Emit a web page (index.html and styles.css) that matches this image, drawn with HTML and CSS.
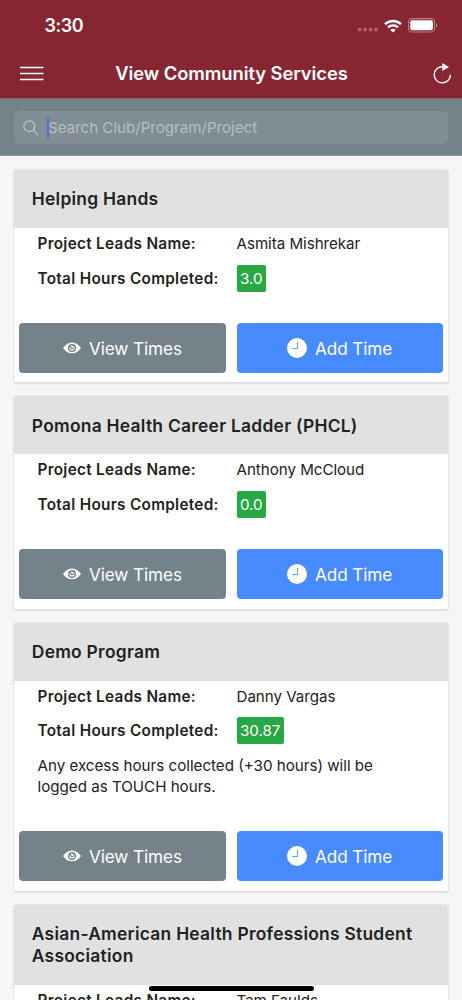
FILE: index.html
```
<!DOCTYPE html>
<html lang="en">
<head>
<meta charset="utf-8">
<title>View Community Services</title>
<link rel="stylesheet" href="styles.css">
</head>
<body>
<svg class="defs" width="0" height="0">
  <symbol id="eye" viewBox="0 0 18 12"><path fill="currentColor" fill-rule="evenodd" d="M9 .5C5 .5 2 3 0 6c2 3 5 5.300 9 5.300S16 9 18 6C16 3 13 .5 9 .5zM9 2a4 4 0 1 1 0 8 4 4 0 0 1 0-8zM9 3.400c-.4 0-.8.1-1.100.2a1.300 1.300 0 1 0 3.200 1c.3.400.5.900.5 1.400a2.600 2.600 0 1 1-5.200 0c0-.6.2-1.200.6-1.600-.1 1.500 1 2.900 2.300 2.900 1 0 1.700-.8 1.700-1.700A2.600 2.600 0 0 0 9 3.400z"/></symbol>
  <symbol id="clock" viewBox="0 0 20 20"><circle cx="10" cy="10" r="10" fill="#fff"/><path d="M10.600 4v6.600H5.200" fill="none" stroke="#488aff" stroke-width=".9"/></symbol>
</svg>
<div class="screen">
  <header class="top">
    <div class="status">
      <span class="time">3:30</span>
      <div class="indicators">
        <svg class="dots" width="22" height="5" viewBox="0 0 22 5" fill="#a8626d"><circle cx="2.500" cy="2.500" r="2"/><circle cx="8" cy="2.500" r="2"/><circle cx="13.500" cy="2.500" r="2"/><circle cx="19" cy="2.500" r="2"/></svg>
        <svg class="wifi" width="18" height="14" viewBox="0 0 18 14" fill="none" stroke="#fff" stroke-width="2.400"><path d="M1 5.200a11.500 11.500 0 0 1 16 0"/><path d="M4 8.400a7.200 7.200 0 0 1 10 0"/><path d="M6.300 10.900a4 4 0 0 1 5.400 0L9 13.600z" fill="#fff" stroke="none"/></svg>
        <svg class="battery" width="30" height="15" viewBox="0 0 30 15"><rect x=".6" y=".6" width="26" height="13.400" rx="3.600" fill="none" stroke="#b9808a" stroke-width="1.100"/><rect x="2.300" y="2.300" width="22.600" height="10" rx="2" fill="#fff"/><path d="M28 5c1.600.8 1.600 3.800 0 4.600z" fill="#b9808a"/></svg>
      </div>
    </div>
    <div class="navbar">
      <svg class="menu" width="24" height="15" viewBox="0 0 24 15" stroke="#fff" stroke-width="1.500"><path d="M0 1.500h23.500M0 7.500h23.500M0 13.500h23.500"/></svg>
      <h1 class="page-title">View Community Services</h1>
      <svg class="refresh" width="19" height="21" viewBox="0 0 19 21"><path d="M9.800 3.700A8.100 8.100 0 1 0 17.400 11.700" fill="none" stroke="#fff" stroke-width="1.400"/><path d="M9.300 0l6.800 4-6.800 4z" fill="#fff"/></svg>
    </div>
  </header>
  <div class="searchbar">
    <div class="search-field">
      <svg class="glass" width="16" height="16" viewBox="0 0 16 16" fill="none" stroke="#b9c2c5" stroke-width="1.300"><circle cx="6.300" cy="6.300" r="5.400"/><path d="M10.300 10.300l5 5"/></svg>
      <span class="caret"></span>
      <span class="placeholder">Search Club/Program/Project</span>
    </div>
  </div>
  <main class="list">
    <article class="card">
      <h2 class="card-title">Helping Hands</h2>
      <div class="row"><b class="label">Project Leads Name:</b><span class="value">Asmita Mishrekar</span></div>
      <div class="row hours"><b class="label">Total Hours Completed:</b><span class="badge">3.0</span></div>
      <div class="actions">
        <button class="btn view"><svg class="eye"><use href="#eye"/></svg><span>View Times</span></button>
        <button class="btn add"><svg class="clock"><use href="#clock"/></svg><span>Add Time</span></button>
      </div>
    </article>
    <article class="card">
      <h2 class="card-title">Pomona Health Career Ladder (PHCL)</h2>
      <div class="row"><b class="label">Project Leads Name:</b><span class="value">Anthony McCloud</span></div>
      <div class="row hours"><b class="label">Total Hours Completed:</b><span class="badge">0.0</span></div>
      <div class="actions">
        <button class="btn view"><svg class="eye"><use href="#eye"/></svg><span>View Times</span></button>
        <button class="btn add"><svg class="clock"><use href="#clock"/></svg><span>Add Time</span></button>
      </div>
    </article>
    <article class="card">
      <h2 class="card-title">Demo Program</h2>
      <div class="row"><b class="label">Project Leads Name:</b><span class="value">Danny Vargas</span></div>
      <div class="row hours"><b class="label">Total Hours Completed:</b><span class="badge">30.87</span></div>
      <p class="note">Any excess hours collected (+30 hours) will be<br>logged as TOUCH hours.</p>
      <div class="actions">
        <button class="btn view"><svg class="eye"><use href="#eye"/></svg><span>View Times</span></button>
        <button class="btn add"><svg class="clock"><use href="#clock"/></svg><span>Add Time</span></button>
      </div>
    </article>
    <article class="card">
      <h2 class="card-title tall">Asian-American Health Professions Student<br>Association</h2>
      <div class="row"><b class="label">Project Leads Name:</b><span class="value">Tam Faulds</span></div>
    </article>
  </main>
  <div class="home-indicator"></div>
</div>
</body>
</html>
```
FILE: styles.css
```
* { box-sizing: border-box; }
body { margin: 0; font-family: Inter, "Liberation Sans", sans-serif; color: #222; background: #f6f6f6; }
h1, h2, p { margin: 0; }
svg { display: block; flex: none; }
.defs { position: absolute; }
.screen { position: relative; width: 462px; height: 1000px; overflow: hidden; background: #f6f6f6; }
.top { height: 98px; background: #862633; color: #fff; }
.status { height: 49px; padding: 2px 24px 0 44.500px; display: flex; align-items: center; justify-content: space-between; }
.time { font-size: 18px; font-weight: 600; line-height: 22px; letter-spacing: -.5px; }
.indicators { display: flex; align-items: center; }
.dots { margin: 8px 5px 0 0; }
.wifi { margin-right: 6px; }
.navbar { height: 48px; padding: 0 9.500px 0 19.500px; display: flex; align-items: center; justify-content: space-between; }
.page-title { font-size: 18.400px; font-weight: 600; line-height: 24px; white-space: nowrap; letter-spacing: -.07px; margin-right: 14px; }
.searchbar { height: 58px; padding: 12px 14px 0; background: #748389; border-top: 1px solid #687279; border-bottom: 1px solid #8b979b; }
.search-field { height: 33px; border-radius: 5px; background: #808d92; display: flex; align-items: center; padding-left: 8.500px; }
.caret { width: 2px; height: 21px; background: #4a6cf5; margin-left: 8.500px; }
.placeholder { font-size: 15.150px; color: #b5bfc3; white-space: nowrap; margin-left: -1px; letter-spacing: -.02px; }
.list { padding: 14px 14px 0; display: flex; flex-direction: column; gap: 14px; }
.card { background: #fff; border-radius: 2px; box-shadow: 0 0 0 .7px #e4e4e4, 0 1px 2px rgba(0,0,0,.28); overflow: hidden; height: 212.300px; display: flex; flex-direction: column; flex: none; }
.card:nth-child(3) { height: 268px; }
.card-title { height: 58px; flex: none; padding: 1px 17.800px 0; background: #e1e1e1; font-size: 17.400px; line-height: 22.300px; font-weight: 600; letter-spacing: .27px; display: flex; align-items: center; white-space: nowrap; }
.card-title.tall { height: 80px; }
.row { display: grid; grid-template-columns: 199px 1fr; align-items: center; padding-left: 23.500px; height: 31px; font-size: 15.150px; white-space: nowrap; flex: none; }
.value { letter-spacing: -.03px; }
.hours { height: 38px; }
.label { font-weight: 600; font-size: 15.300px; letter-spacing: .31px; }
.badge { justify-self: start; background: #28a745; color: #fff; border-radius: 2px; height: 27px; line-height: 27px; padding: 0 3.500px; letter-spacing: -.05px; }
.note { padding: 5px 23.500px 0; font-size: 15.150px; line-height: 21.300px; white-space: nowrap; }
.actions { margin-top: auto; padding: 0 5.300px 9.500px; display: grid; grid-template-columns: 1fr 1fr; gap: 11px; }
.btn { height: 50px; border: 0; border-radius: 4px; color: #fff; font: 400 17.200px Inter, "Liberation Sans", sans-serif; letter-spacing: -.1px; display: flex; align-items: center; justify-content: center; padding: 0; white-space: nowrap; }
.btn span { padding-top: 1px; }
.view { background: #748389; }
.add { background: #488aff; }
.eye { width: 18px; height: 12px; margin-right: 8px; }
.clock { width: 20px; height: 20px; margin-right: 8px; }
.home-indicator { position: absolute; left: 148.500px; bottom: 9px; width: 165px; height: 5.500px; border-radius: 3px; background: #000; }
```
